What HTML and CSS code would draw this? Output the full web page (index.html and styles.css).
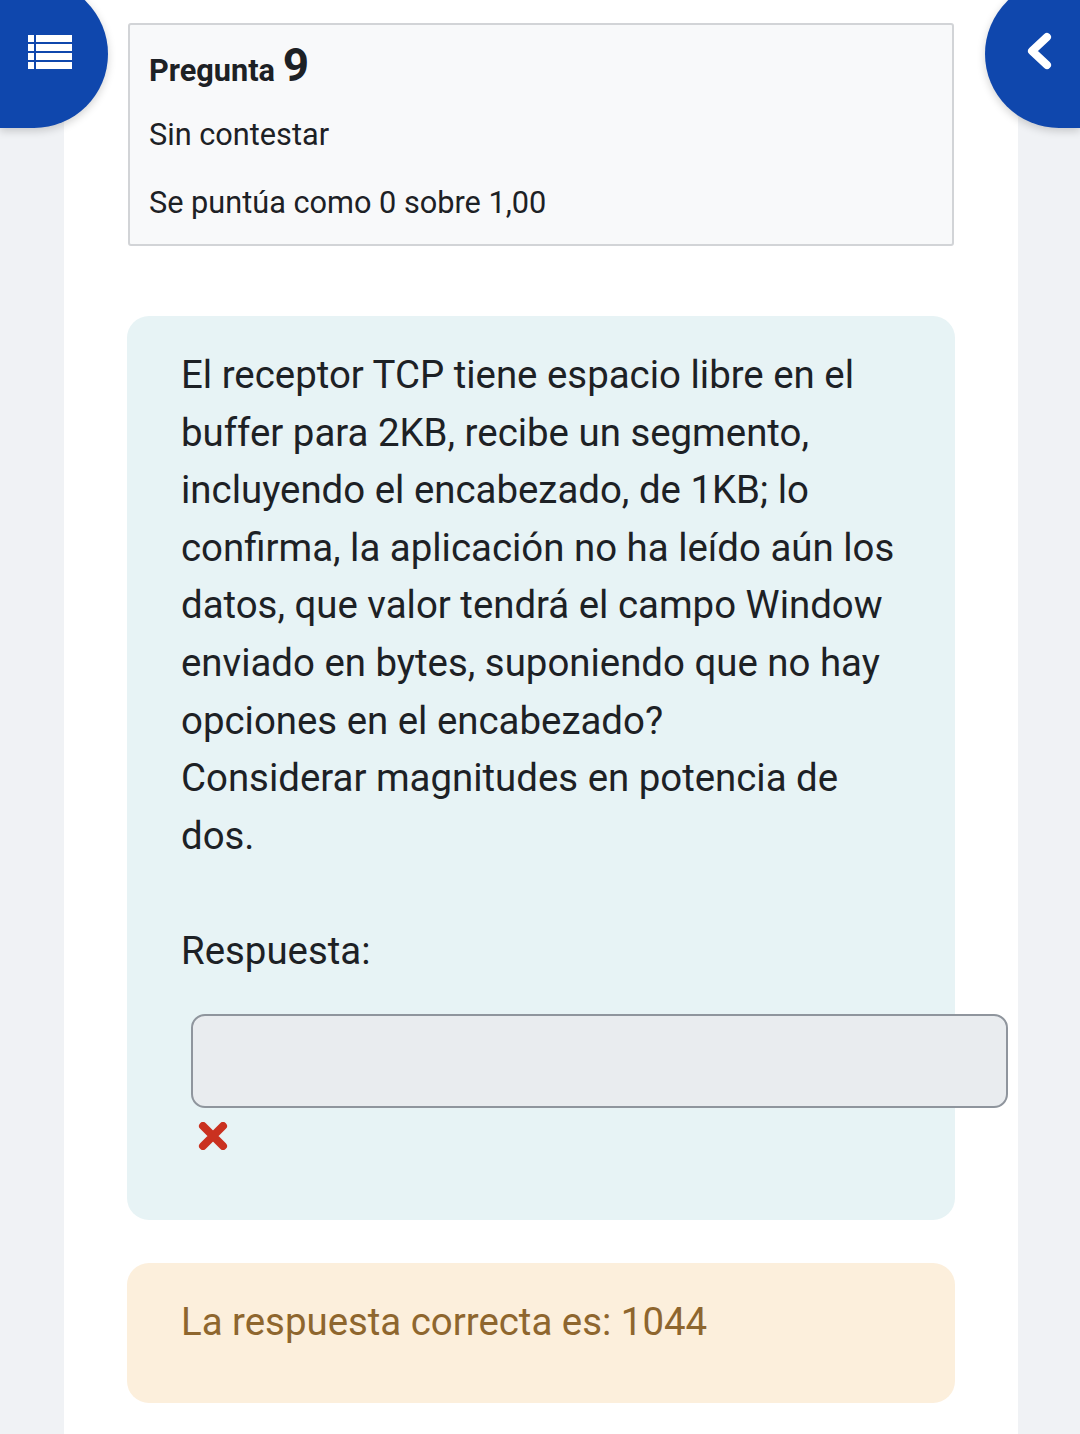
FILE: index.html
```html
<!DOCTYPE html>
<html lang="es">
<head>
<meta charset="utf-8">
<title>Pregunta 9</title>
<link rel="stylesheet" href="styles.css">
</head>
<body>
<div class="page">
  <div class="info">
    <h3 class="no">Pregunta <span class="qno">9</span></h3>
    <div class="state">Sin contestar</div>
    <div class="grade">Se puntúa como 0 sobre 1,00</div>
  </div>

  <div class="formulation">
    <p class="qtext">El receptor TCP tiene espacio libre en el buffer para 2KB, recibe un segmento, incluyendo el encabezado, de 1KB; lo confirma, la aplicación no ha leído aún los datos, que valor tendrá el campo Window enviado en bytes, suponiendo que no hay opciones en el encabezado?<br>Considerar magnitudes en potencia de dos.</p>
    <div class="ablock">
      <label class="alabel">Respuesta:</label>
      <div class="answer-input"></div>
      <svg class="wrong" width="30" height="28" viewBox="0 0 30 28" aria-label="Incorrecta">
        <path d="M5 4 L25 24 M25 4 L5 24" stroke="#ca3120" stroke-width="8" stroke-linecap="round" fill="none"/>
      </svg>
    </div>
  </div>

  <div class="outcome">
    <p class="rightanswer">La respuesta correcta es: 1044</p>
  </div>
</div>

<button class="drawer-toggle left" aria-label="Índice">
  <svg width="44" height="36" viewBox="0 0 44 36">
    <g fill="#ffffff">
      <rect x="0" y="0" width="6" height="7"/><rect x="8" y="0" width="36" height="7"/>
      <rect x="0" y="9" width="6" height="7"/><rect x="8" y="9" width="36" height="7"/>
      <rect x="0" y="18" width="6" height="7"/><rect x="8" y="18" width="36" height="7"/>
      <rect x="0" y="27" width="6" height="7"/><rect x="8" y="27" width="36" height="7"/>
    </g>
  </svg>
</button>
<button class="drawer-toggle right" aria-label="Abrir bloque">
  <svg width="30" height="40" viewBox="0 0 30 40">
    <polyline points="21,5 6,19 21,33" stroke="#ffffff" stroke-width="8" stroke-linecap="round" stroke-linejoin="round" fill="none"/>
  </svg>
</button>
</body>
</html>
```

FILE: styles.css
```css
html, body {
  margin: 0;
  padding: 0;
}
body {
  background: #f0f2f5;
  font-family: Roboto, "Liberation Sans", Arial, sans-serif;
  color: #1d2125;
}
.page {
  margin: 0 62px 0 64px;
  background: #ffffff;
  min-height: 1434px;
  box-sizing: border-box;
  padding: 23px 63px 32px 63px;
}
.info {
  background: #f8f9fa;
  border: 2px solid #d2d4d7;
  border-radius: 3px;
  padding: 13px 19px 18px 19px;
  height: 223px;
  box-sizing: border-box;
  margin-left: 1px;
  margin-right: 1px;
}
.no {
  margin: 0 0 19px 0;
  font-size: 30.7px;
  font-weight: 700;
  line-height: 55px;
  height: 55px;
}
.qno {
  font-size: 46px;
  font-weight: 700;
}
.state, .grade {
  font-size: 30.7px;
  line-height: 46px;
}
.grade {
  margin-top: 22px;
}
.formulation {
  margin-top: 70px;
  background: #e7f3f5;
  border-radius: 22px;
  padding: 30px 54px 70px 54px;
  font-size: 38.4px;
  line-height: 57.6px;
}
.qtext {
  margin: 0 0 57.6px 0;
}
.ablock {
  display: flex;
  flex-direction: column;
  align-items: flex-start;
}
.alabel {
  display: block;
}
.answer-input {
  margin-top: 34px;
  margin-left: 10px;
  width: 817px;
  height: 94px;
  box-sizing: border-box;
  background: #e9ecef;
  border: 2px solid #8f959d;
  border-radius: 14px;
  flex: none;
}
.wrong {
  display: block;
  margin-top: 14px;
  margin-left: 17px;
}
.outcome {
  margin-top: 43px;
  background: #fcefdc;
  border-radius: 22px;
  padding: 30px 54px 53px 54px;
  font-size: 38.4px;
  line-height: 57.6px;
  color: #8e662e;
}
.rightanswer {
  margin: 0;
}
.drawer-toggle {
  position: absolute;
  top: -20px;
  width: 108px;
  height: 148px;
  border: none;
  padding: 0;
  background: #0f47ad;
  box-shadow: 0 3px 8px rgba(0, 0, 0, 0.18);
  display: flex;
  align-items: center;
  cursor: pointer;
  box-sizing: border-box;
}
.drawer-toggle.left {
  left: 0;
  border-radius: 0 74px 74px 0;
  justify-content: flex-start;
  padding-left: 28px;
  padding-bottom: 2px;
}
.drawer-toggle.right {
  right: 0;
  width: 95px;
  border-radius: 74px 0 0 74px;
  justify-content: flex-start;
  padding-left: 41px;
  padding-bottom: 4px;
}
```
